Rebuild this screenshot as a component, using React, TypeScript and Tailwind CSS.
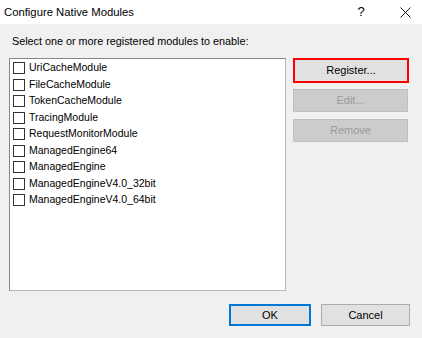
import React from "react";

const modules = [
  "UriCacheModule",
  "FileCacheModule",
  "TokenCacheModule",
  "TracingModule",
  "RequestMonitorModule",
  "ManagedEngine64",
  "ManagedEngine",
  "ManagedEngineV4.0_32bit",
  "ManagedEngineV4.0_64bit",
];

export default function App() {
  return (
    <div
      className="w-[422px] h-[338px] flex flex-col bg-[#f0f0f0] text-black overflow-hidden"
      style={{ fontFamily: '"Liberation Sans", "Noto Sans", sans-serif' }}
    >
      <div className="h-[24px] bg-white flex items-center pl-[4px] pr-[10px] text-[11.3px]">
        <span className="flex-1">Configure Native Modules</span>
        <span className="w-[10px] text-center mr-[34px] text-[13px]">?</span>
        <svg width="11" height="11" viewBox="0 0 11 11" className="mr-[1px]">
          <path d="M0.5 0.5 L10.5 10.5 M10.5 0.5 L0.5 10.5" stroke="#111" strokeWidth="1" />
        </svg>
      </div>
      <div className="flex-1 flex flex-col pl-[9px] pr-[12px] pt-[9px]">
        <div className="pl-[3px] h-[16px] leading-[16px] text-[10.8px]">
          Select one or more registered modules to enable:
        </div>
        <div className="flex mt-[9px] gap-[7px]">
          <div className="w-[277px] h-[233px] bg-white border border-[#828790] border-r-[#b8b8b8] border-b-[#b8b8b8] pt-[1px] pl-[2px] flex flex-col">
            {modules.map((m) => (
              <div key={m} className="h-[16.5px] flex items-center text-[10.5px]">
                <span className="w-[12px] h-[12px] border border-[#333] bg-white ml-[1px] mr-[4px] shrink-0" />
                <span>{m}</span>
              </div>
            ))}
          </div>
          <div className="w-[116px] flex flex-col gap-[6px] text-[11px]">
            <div className="h-[25px] bg-[#e1e1e1] border-2 border-[#ff0000] flex items-center justify-center">
              Register...
            </div>
            <div className="h-[23px] bg-[#cccccc] border border-[#bfbfbf] text-[#9a9a9a] flex items-center justify-center mr-[1px]">
              Edit...
            </div>
            <div className="h-[23px] bg-[#cccccc] border border-[#bfbfbf] text-[#9a9a9a] flex items-center justify-center mr-[1px] mt-[1px]">
              Remove
            </div>
          </div>
        </div>
        <div className="flex justify-end gap-[10px] mt-[13px] text-[11px]">
          <div className="w-[82px] h-[22px] bg-[#e1e1e1] border-2 border-[#0078d7] flex items-center justify-center">
            OK
          </div>
          <div className="w-[89px] h-[22px] bg-[#e1e1e1] border border-[#adadad] flex items-center justify-center">
            Cancel
          </div>
        </div>
      </div>
    </div>
  );
}
